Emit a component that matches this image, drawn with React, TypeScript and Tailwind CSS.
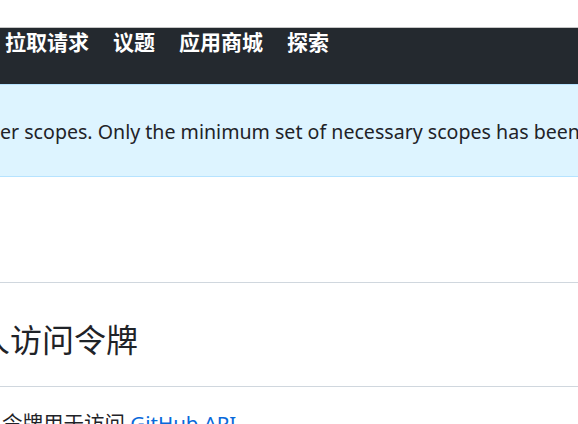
export default function App() {
  const font = { fontFamily: '"Noto Sans", "Noto Sans CJK SC", sans-serif' };
  return (
    <div className="w-[578px] h-[424px] overflow-hidden bg-white" style={font}>
      <div className="h-[28px] bg-white border-b border-[#c6c6c6]" />
      <nav className="h-[56px] bg-[#24292f] flex items-start gap-[24px] pl-[5px] pt-[1px] text-white font-bold text-[21px] leading-[26px] whitespace-nowrap">
        <span>拉取请求</span>
        <span>议题</span>
        <span>应用商城</span>
        <span>探索</span>
      </nav>
      <div className="h-[93px] bg-[#ddf4ff] border-y border-[#b6e3ff] flex items-center whitespace-nowrap text-[#1f2328] text-[19.6px]">
        <span className="pl-[0px] pt-[2px]">er scopes. Only the minimum set of necessary scopes has been granted.</span>
      </div>
      <div className="h-[105px]" />
      <div className="h-[105px] border-y border-[#d0d7de] flex items-center whitespace-nowrap">
        <h2 className="ml-[-54px] mt-[10px] text-[32px] font-normal text-[#1f2328]">个人访问令牌</h2>
      </div>
      <div className="pt-[21px] whitespace-nowrap text-[20.5px] text-[#1f2328]">
        <span className="ml-[2px]">令牌用于访问 <a className="text-[#0969da]">GitHub API</a></span>
      </div>
    </div>
  );
}
